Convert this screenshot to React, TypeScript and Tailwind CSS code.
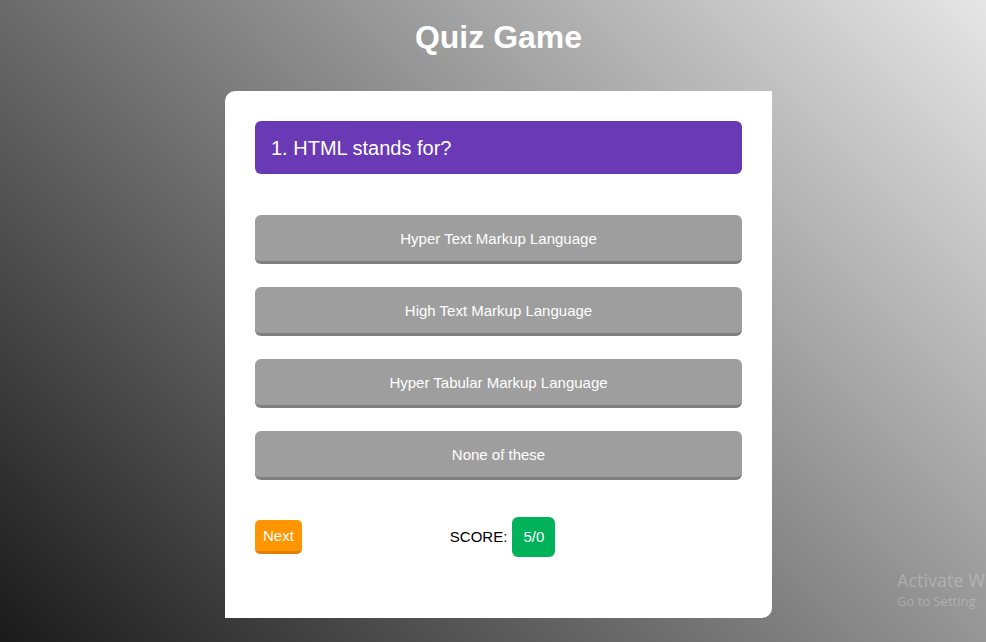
import React from 'react';

const options = [
  'Hyper Text Markup Language',
  'High Text Markup Language',
  'Hyper Tabular Markup Language',
  'None of these',
];

export default function App() {
  return (
    <div className="relative min-h-screen overflow-hidden bg-[linear-gradient(45deg,#1a1a1a,#e6e6e6)] font-['Liberation_Sans',Arial,sans-serif]">
      <div className="flex flex-col items-center pl-[11px] pt-[17px]">
        {/* 标题 */}
        <h1 className="text-[32px] font-bold leading-[40px] text-white">Quiz Game</h1>

        {/* 卡片 */}
        <div className="mt-[34px] w-[547px] rounded-tl-[10px] rounded-br-[10px] bg-white px-[30px] pt-[30px] pb-[61px]">
          <div className="flex h-[53px] items-center rounded-[6px] bg-[#6a3ab6] px-4 text-[20px] text-white">
            1. HTML stands for?
          </div>

          <div className="mt-[41px] flex flex-col gap-[23px]">
            {options.map((o) => (
              <button
                key={o}
                className="h-[49px] w-full rounded-[6px] border-b-[3px] border-[#7f7f7f] bg-[#9e9e9e] pt-[2px] text-[15px] text-white"
              >
                {o}
              </button>
            ))}
          </div>

          <div className="mt-[37px] flex items-center">
            <button className="h-[34px] rounded-[5px] border-b-[3px] border-[#e07f00] bg-[#ff9500] px-[8px] pt-[1px] text-[15px] text-white">
              Next
            </button>
            <div className="ml-[148px] flex items-center gap-[5px]">
              <span className="pt-[1px] text-[15px] text-black">SCORE:</span>
              <span className="flex h-[40px] w-[43px] items-center justify-center rounded-[6px] bg-[#00b35a] text-[15px] text-white">
                5/0
              </span>
            </div>
          </div>
        </div>
      </div>

      {/* 水印 */}
      <div className="absolute left-[897px] top-[568px] whitespace-nowrap font-['Open_Sans',sans-serif] text-white/25">
        <div className="text-[18px] leading-[24px]">Activate W</div>
        <div className="text-[13px] leading-[18px]">Go to Setting</div>
      </div>
    </div>
  );
}
